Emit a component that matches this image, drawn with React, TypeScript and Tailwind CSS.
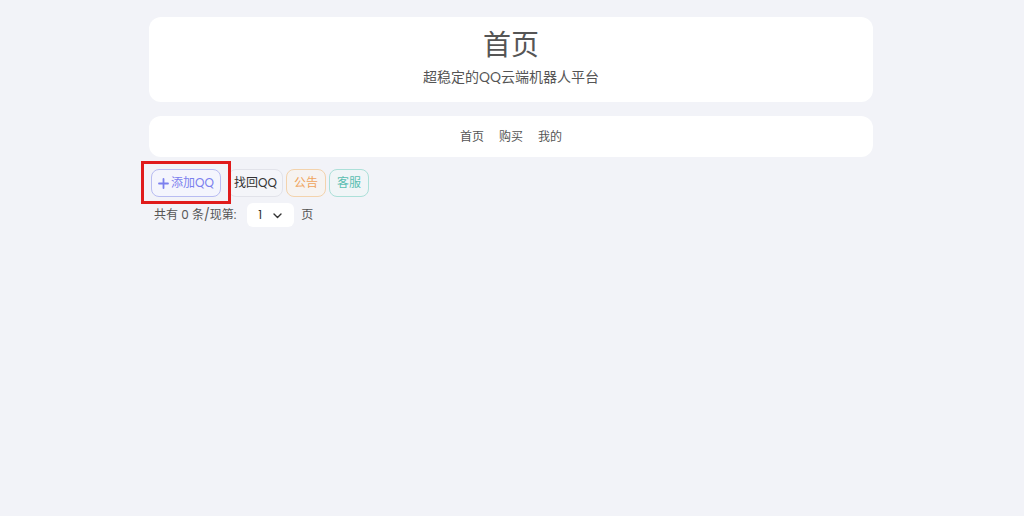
import React from "react";

const font = { fontFamily: '"Poppins", "Inter", "Noto Sans CJK SC", sans-serif' };

export default function App() {
  return (
    <div className="min-h-[516px] w-full bg-[#f2f3f8] text-[#555]" style={font}>
      <div className="ml-[149px] w-[724px] pt-[17px]">
        <div className="flex flex-col items-center rounded-[12px] bg-white pt-[11px] pb-[15px]">
          <div className="text-[28px] leading-[36px] text-[#555]">首页</div>
          <div className="mt-[3px] text-[14px] leading-[20px] text-[#555]">超稳定的QQ云端机器人平台</div>
        </div>
        <div className="mt-[14px] flex h-[41px] items-center justify-center gap-[15px] rounded-[12px] bg-white text-[12px] text-[#555]">
          <span>首页</span>
          <span>购买</span>
          <span>我的</span>
        </div>
        <div className="relative mt-[12px] ml-[2px] flex items-center gap-[3px]">
          <button className="flex h-[28px] w-[70px] items-center justify-center gap-[2px] rounded-[8px] border border-[#b8bcf2] bg-[#f4f5fd] text-[12px] text-[#7b80ee]">
            <svg width="11" height="11" viewBox="0 0 11 11">
              <path d="M5.5 1v9M1 5.5h9" stroke="#7b80ee" strokeWidth="1.8" strokeLinecap="round" />
            </svg>
            添加QQ
          </button>
          <button className="ml-[4px] flex h-[28px] w-[55px] items-center justify-center rounded-[8px] border border-[#e2e3ea] bg-[#f4f5f9] text-[12px] text-[#333]">
            找回QQ
          </button>
          <button className="flex h-[28px] w-[40px] items-center justify-center rounded-[8px] border border-[#f3d3ad] bg-[#f6f3f1] text-[12px] text-[#f0a45c]">
            公告
          </button>
          <button className="flex h-[28px] w-[40px] items-center justify-center rounded-[8px] border border-[#ace0d9] bg-[#f0f5f7] text-[12px] text-[#5bbfb2]">
            客服
          </button>
          <div className="pointer-events-none absolute left-[-10px] top-[-8px] h-[43px] w-[90px] border-[3px] border-[#e01b1b]" />
        </div>
        <div className="mt-[6px] ml-[5px] flex items-center text-[12px] text-[#555]">
          <span>共有 0 条/现第:</span>
          <div className="ml-[11px] flex h-[24px] w-[47px] items-center justify-between rounded-[6px] bg-white px-[11px]">
            <span className="text-[#333]">1</span>
            <svg width="11" height="11" viewBox="0 0 11 11">
              <path d="M2 4l3.5 3.5L9 4" stroke="#333" strokeWidth="1.4" fill="none" strokeLinecap="round" strokeLinejoin="round" />
            </svg>
          </div>
          <span className="ml-[7px]">页</span>
        </div>
      </div>
    </div>
  );
}
